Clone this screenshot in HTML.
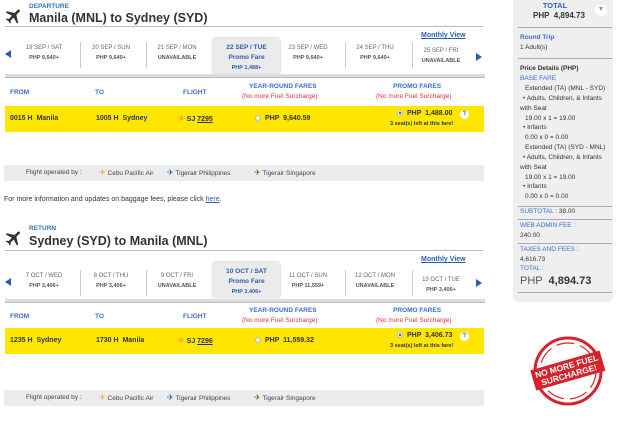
<!DOCTYPE html>
<html><head><meta charset="utf-8"><style>
*{margin:0;padding:0;box-sizing:border-box}
body{width:620px;height:411px;background:#fff;font-family:"Liberation Sans",sans-serif;position:relative;overflow:hidden;color:#333}
.a{position:absolute;white-space:nowrap}
.sec{position:absolute;left:0;width:500px;height:200px}
.lbl{font-size:6.5px;font-weight:bold;color:#3a6fc4}
.ttl{font-size:12.5px;font-weight:bold;color:#333}
.cell{position:absolute;width:66px;text-align:center;font-size:6px;color:#666;line-height:10px}
.cell b{color:#555;font-size:5.5px}
.sel{background:#ebebeb;border-radius:3px 3px 0 0;box-shadow:0 0 2px #bbb;color:#2a5db0;font-weight:bold;font-size:6.5px}
.sep{position:absolute;width:1px;height:26px;background:#ccc}
.hd{font-size:6.5px;font-weight:bold;color:#3a6fc4}
.red{font-size:6.5px;color:#d33}
.yl{position:absolute;left:5px;width:479px;height:26px;background:#ffe600}
.yt{font-size:7px;font-weight:bold;color:#333}
.op{position:absolute;left:4px;width:480px;height:16px;background:#ececec;font-size:6.5px;color:#444}
.radio{display:inline-block;width:6px;height:6px;border-radius:50%;background:#eee;border:1px solid #bbb;vertical-align:-1px;margin-right:4px}
.radio.on{background:radial-gradient(#2a5db0 35%,#eee 45%)}
.sb{font-size:6.5px;color:#333;position:absolute;left:520px;white-space:nowrap}
.sbl{color:#3a6fc4}
.hr{position:absolute;left:518px;width:94px;height:1px;background:#aaa}
.pl{font-size:8px}
</style></head><body>

<!-- Departure -->
<div class="sec" style="top:0">
<svg class="a" style="left:4px;top:6px" width="20" height="20" viewBox="0 0 24 24"><g transform="rotate(45 12 12)"><path d="M21 16v-2l-8-5V3.5c0-.83-.67-1.5-1.5-1.5S10 2.67 10 3.5V9l-8 5v2l8-2.5V19l-2 1.5V22l3.5-1 3.5 1v-1.5L13 19v-5.5l8 2.5z" fill="#333"/></g></svg>
<div class="a lbl" style="left:29px;top:3px">DEPARTURE</div>
<div class="a ttl" style="left:29px;top:11px">Manila (MNL) to Sydney (SYD)</div>
<div class="a" style="left:5px;top:26px;width:478px;height:1px;background:#bbb"></div>
<div class="a" style="left:5px;top:50px;width:0;height:0;border-top:4px solid transparent;border-bottom:4px solid transparent;border-right:6px solid #2a5db0"></div>
<div class="cell" style="left:11px;top:43px">19 SEP / SAT<br><b>PHP 9,640+</b></div>
<div class="sep" style="left:80px;top:42px"></div>
<div class="cell" style="left:78px;top:43px">20 SEP / SUN<br><b>PHP 9,640+</b></div>
<div class="sep" style="left:146px;top:42px"></div>
<div class="cell" style="left:144px;top:43px">21 SEP / MON<br><b>UNAVAILABLE</b></div>
<div class="cell sel" style="left:213px;top:38px;width:67px;height:35px;padding-top:5px">22 SEP / TUE<br>Promo Fare<br><span style="font-size:5.5px">PHP 1,488+</span></div>
<div class="cell" style="left:275px;top:43px">23 SEP / WED<br><b>PHP 9,640+</b></div>
<div class="sep" style="left:345px;top:42px"></div>
<div class="cell" style="left:342px;top:43px">24 SEP / THU<br><b>PHP 9,640+</b></div>
<div class="sep" style="left:412px;top:42px"></div>
<div class="cell" style="left:408px;top:46px">25 SEP / FRI<br><b>UNAVAILABLE</b></div>
<div class="a" style="left:421px;top:32px;font-size:7px;font-weight:bold;color:#2a5db0;text-decoration:underline">Monthly View</div>
<div class="a" style="left:476px;top:53px;width:0;height:0;border-top:4px solid transparent;border-bottom:4px solid transparent;border-left:6px solid #2a5db0"></div>
<div class="a" style="left:5px;top:74px;width:480px;height:4px;background:#ddd;border-bottom:1px solid #bbb"></div>
<div class="a hd" style="left:10px;top:89px">FROM</div>
<div class="a hd" style="left:95px;top:89px">TO</div>
<div class="a hd" style="left:183px;top:89px">FLIGHT</div>
<div class="a hd" style="left:249px;top:83px">YEAR-ROUND FARES</div>
<div class="a red" style="left:242px;top:93px">(No more Fuel Surcharge)</div>
<div class="a hd" style="left:393px;top:83px">PROMO FARES</div>
<div class="a red" style="left:376px;top:93px">(No more Fuel Surcharge)</div>
<div class="yl" style="top:106px"></div>
<div class="a yt" style="left:10px;top:115px">0015 H &nbsp;Manila</div>
<div class="a yt" style="left:96px;top:115px">1005 H &nbsp;Sydney</div>
<div class="a yt" style="left:178px;top:114px"><span class="pl" style="color:#f5a623">✈</span> SJ <u>7295</u></div>
<div class="a yt" style="left:255px;top:115px"><span class="radio"></span>PHP &nbsp;9,640.59</div>
<div class="a yt" style="left:397px;top:110px"><span class="radio on"></span>PHP &nbsp;1,488.00</div>
<div class="a" style="left:460px;top:110px;width:9px;height:9px;border-radius:50%;background:#fff;color:#2a5db0;font-size:6px;font-weight:bold;text-align:center;line-height:9px">?</div>
<div class="a" style="left:390px;top:121px;font-size:5.5px;font-weight:bold;color:#333">3 seat(s) left at this fare!</div>
<div class="op" style="top:165px"><span class="a" style="left:22px;top:4px">Flight operated by :</span><span class="a" style="left:95px;top:3px"><span class="pl" style="color:#f5a623">✈</span> Cebu Pacific Air</span><span class="a" style="left:163px;top:3px"><span class="pl" style="color:#2a5db0">✈</span> Tigerair Philippines</span><span class="a" style="left:250px;top:3px"><span class="pl" style="color:#3a7a1a">✈</span> Tigerair Singapore</span></div>
</div>

<div class="a" style="left:4px;top:196px;font-size:7px;color:#333">For more information and updates on baggage fees, please click <u style="color:#2a5db0">here</u>.</div>

<!-- Return -->
<div class="sec" style="top:222px">
<svg class="a" style="left:4px;top:6px" width="20" height="20" viewBox="0 0 24 24"><g transform="rotate(45 12 12)"><path d="M21 16v-2l-8-5V3.5c0-.83-.67-1.5-1.5-1.5S10 2.67 10 3.5V9l-8 5v2l8-2.5V19l-2 1.5V22l3.5-1 3.5 1v-1.5L13 19v-5.5l8 2.5z" fill="#333"/></g></svg>
<div class="a lbl" style="left:29px;top:3px">RETURN</div>
<div class="a ttl" style="left:29px;top:12px">Sydney (SYD) to Manila (MNL)</div>
<div class="a" style="left:5px;top:28px;width:478px;height:1px;background:#bbb"></div>
<div class="a" style="left:5px;top:56px;width:0;height:0;border-top:4px solid transparent;border-bottom:4px solid transparent;border-right:6px solid #2a5db0"></div>
<div class="cell" style="left:11px;top:49px">7 OCT / WED<br><b>PHP 3,406+</b></div>
<div class="sep" style="left:80px;top:48px"></div>
<div class="cell" style="left:78px;top:49px">8 OCT / THU<br><b>PHP 3,406+</b></div>
<div class="sep" style="left:146px;top:48px"></div>
<div class="cell" style="left:144px;top:49px">9 OCT / FRI<br><b>UNAVAILABLE</b></div>
<div class="cell sel" style="left:213px;top:40px;width:67px;height:35px;padding-top:5px">10 OCT / SAT<br>Promo Fare<br><span style="font-size:5.5px">PHP 3,406+</span></div>
<div class="cell" style="left:275px;top:49px">11 OCT / SUN<br><b>PHP 11,559+</b></div>
<div class="sep" style="left:345px;top:48px"></div>
<div class="cell" style="left:342px;top:49px">12 OCT / MON<br><b>UNAVAILABLE</b></div>
<div class="sep" style="left:412px;top:48px"></div>
<div class="cell" style="left:408px;top:53px">13 OCT / TUE<br><b>PHP 3,406+</b></div>
<div class="a" style="left:421px;top:34px;font-size:7px;font-weight:bold;color:#2a5db0;text-decoration:underline">Monthly View</div>
<div class="a" style="left:476px;top:57px;width:0;height:0;border-top:4px solid transparent;border-bottom:4px solid transparent;border-left:6px solid #2a5db0"></div>
<div class="a" style="left:5px;top:77px;width:480px;height:4px;background:#ddd;border-bottom:1px solid #bbb"></div>
<div class="a hd" style="left:10px;top:91px">FROM</div>
<div class="a hd" style="left:95px;top:91px">TO</div>
<div class="a hd" style="left:183px;top:91px">FLIGHT</div>
<div class="a hd" style="left:249px;top:85px">YEAR-ROUND FARES</div>
<div class="a red" style="left:242px;top:95px">(No more Fuel Surcharge)</div>
<div class="a hd" style="left:393px;top:85px">PROMO FARES</div>
<div class="a red" style="left:376px;top:95px">(No more Fuel Surcharge)</div>
<div class="yl" style="top:106px"></div>
<div class="a yt" style="left:10px;top:115px">1235 H &nbsp;Sydney</div>
<div class="a yt" style="left:96px;top:115px">1730 H &nbsp;Manila</div>
<div class="a yt" style="left:178px;top:114px"><span class="pl" style="color:#f5a623">✈</span> SJ <u>7296</u></div>
<div class="a yt" style="left:255px;top:115px"><span class="radio"></span>PHP &nbsp;11,559.32</div>
<div class="a yt" style="left:397px;top:110px"><span class="radio on"></span>PHP &nbsp;3,406.73</div>
<div class="a" style="left:460px;top:110px;width:9px;height:9px;border-radius:50%;background:#fff;color:#2a5db0;font-size:6px;font-weight:bold;text-align:center;line-height:9px">?</div>
<div class="a" style="left:390px;top:121px;font-size:5.5px;font-weight:bold;color:#333">3 seat(s) left at this fare!</div>
<div class="op" style="top:168px"><span class="a" style="left:22px;top:4px">Flight operated by :</span><span class="a" style="left:95px;top:3px"><span class="pl" style="color:#f5a623">✈</span> Cebu Pacific Air</span><span class="a" style="left:163px;top:3px"><span class="pl" style="color:#2a5db0">✈</span> Tigerair Philippines</span><span class="a" style="left:250px;top:3px"><span class="pl" style="color:#3a7a1a">✈</span> Tigerair Singapore</span></div>
</div>

<!-- Sidebar -->
<div class="a" style="left:513px;top:0;width:100px;height:302px;background:#efefef;border-radius:0 0 5px 5px"></div>
<div class="a" style="left:530px;top:1px;width:50px;text-align:center;font-size:7.5px;font-weight:bold;color:#2a5db0">TOTAL</div>
<div class="a" style="left:533px;top:11px;font-size:8px;font-weight:bold;color:#333">PHP &nbsp;4,894.73</div>
<div class="a" style="left:595px;top:4px;width:12px;height:12px;border-radius:50%;background:#fff;color:#999;font-size:7px;text-align:center;line-height:12px">▼</div>
<div class="hr" style="top:27px"></div>
<div class="sb" style="top:34px;font-weight:bold;color:#3a6fc4">Round Trip</div>
<div class="sb" style="top:44px">1 Adult(s)</div>
<div class="hr" style="top:58px"></div>
<div class="sb" style="top:65px;font-weight:bold">Price Details (PHP)</div>
<div class="sb sbl" style="top:75px">BASE FARE</div>
<div class="sb" style="top:85px;left:525px">Extended (TA) (MNL - SYD)</div>
<div class="sb" style="top:95px;left:523px">• Adults, Children, &amp; Infants</div>
<div class="sb" style="top:105px">with Seat</div>
<div class="sb" style="top:115px;left:525px">19.00 x 1 = 19.00</div>
<div class="sb" style="top:124px;left:523px">• Infants</div>
<div class="sb" style="top:134px;left:525px">0.00 x 0 = 0.00</div>
<div class="sb" style="top:144px;left:525px">Extended (TA) (SYD - MNL)</div>
<div class="sb" style="top:154px;left:523px">• Adults, Children, &amp; Infants</div>
<div class="sb" style="top:164px">with Seat</div>
<div class="sb" style="top:174px;left:525px">19.00 x 1 = 19.00</div>
<div class="sb" style="top:183px;left:523px">• Infants</div>
<div class="sb" style="top:193px;left:525px">0.00 x 0 = 0.00</div>
<div class="hr" style="top:206px"></div>
<div class="sb" style="top:208px"><span class="sbl">SUBTOTAL : </span>38.00</div>
<div class="hr" style="top:219px"></div>
<div class="sb sbl" style="top:222px">WEB ADMIN FEE :</div>
<div class="sb" style="top:232px">240.00</div>
<div class="hr" style="top:243px"></div>
<div class="sb sbl" style="top:246px">TAXES AND FEES :</div>
<div class="sb" style="top:256px">4,616.73</div>
<div class="sb sbl" style="top:265px">TOTAL :</div>
<div class="sb" style="top:275px;font-size:11px;color:#555">PHP &nbsp;<b style="color:#333">4,894.73</b></div>
<div class="hr" style="top:292px"></div>

<!-- Stamp -->
<svg class="a" style="left:528px;top:333px" width="80" height="76" viewBox="0 0 80 76">
<circle cx="40" cy="38" r="33" fill="none" stroke="#d4232b" stroke-width="3"/>
<circle cx="40" cy="38" r="28" fill="none" stroke="#d4232b" stroke-width="1.2" stroke-dasharray="18 6"/>
<g transform="rotate(-16 40 38)">
<rect x="4" y="27" width="72" height="21" fill="#d4232b"/>
<text x="40" y="36" text-anchor="middle" font-family="Liberation Sans" font-weight="bold" font-size="8.5" fill="#fff">NO MORE FUEL</text>
<text x="40" y="45" text-anchor="middle" font-family="Liberation Sans" font-weight="bold" font-size="8.5" fill="#fff">SURCHARGE!</text>
</g>
</svg>
</body></html>
